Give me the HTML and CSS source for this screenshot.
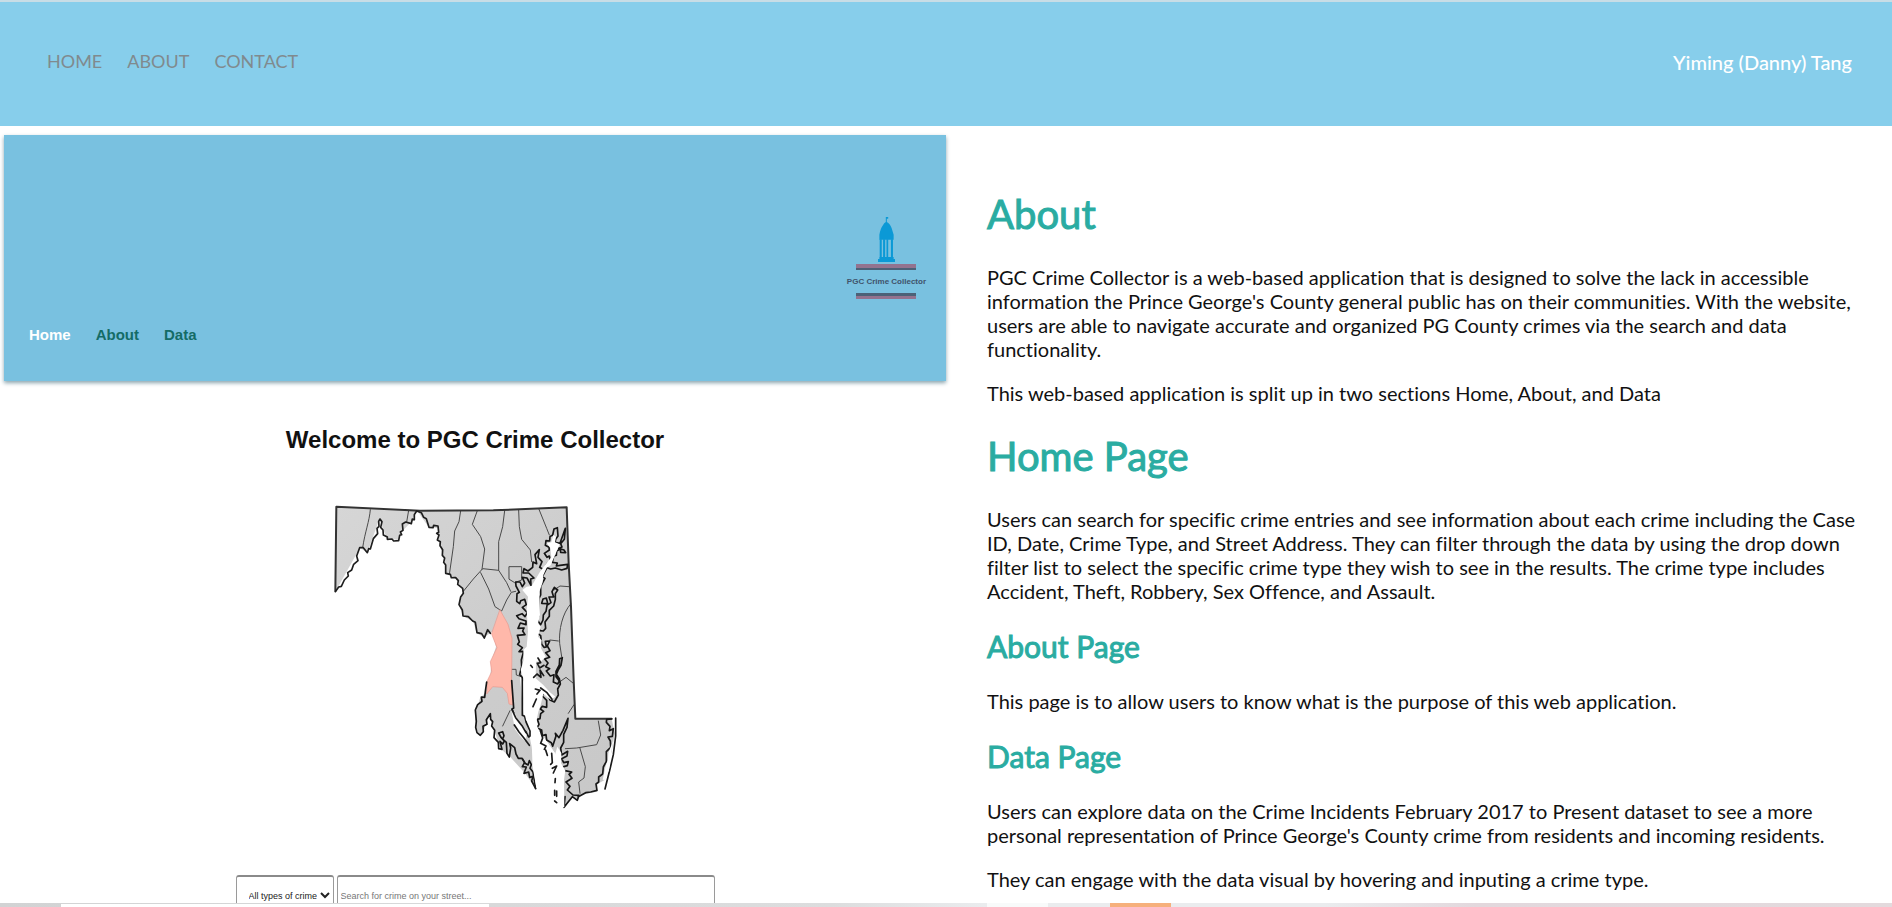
FILE: index.html
```html
<!DOCTYPE html>
<html lang="en">
<head>
<meta charset="utf-8">
<meta name="viewport" content="width=device-width, initial-scale=1">
<title>PGC Crime Collector</title>
<link rel="stylesheet" href="styles.css">
</head>
<body>
<header class="site-header">
  <nav class="site-nav">
    <a href="#home">HOME</a>
    <a href="#about">ABOUT</a>
    <a href="#contact">CONTACT</a>
  </nav>
  <div class="owner">Yiming (Danny) Tang</div>
</header>

<main class="project">
  <section class="preview">
    <div class="banner">
      <nav class="banner-nav">
        <a class="current" href="#app-home">Home</a>
        <a href="#app-about">About</a>
        <a href="#app-data">Data</a>
      </nav>
      <div class="logo">
        <svg class="dome" viewBox="0 0 50 134" preserveAspectRatio="none" aria-hidden="true">
          <g fill="#0b99d6">
            <path d="M23 0h7v5h-4v10q9 4 14 18l6 20v15H4V53q3-19 10-28 4-7 9-10z"/>
            <path d="M5 66h6v56H5zM15 66h6v56h-6zM25 66h5v56h-5zM38 66h6v56h-6zM4 119h42v7H4zM0 125h50v9H0z"/>
          </g>
        </svg>
        <div class="bar bar-top"></div>
        <div class="logo-name">PGC Crime Collector</div>
        <div class="bar bar-bottom"></div>
      </div>
    </div>
    <h2 class="welcome">Welcome to PGC Crime Collector</h2>
    <svg class="map" viewBox="0 0 990 1050" role="img" aria-label="Map of Maryland with Prince George's County highlighted">
      <defs>
        <linearGradient id="land" x1="0" y1="0" x2="1" y2="1">
          <stop offset="0" stop-color="#d6d6d6"/><stop offset="0.5" stop-color="#cdcdcd"/><stop offset="1" stop-color="#c8c8c8"/>
        </linearGradient>
      </defs>
      <g stroke-linejoin="round" stroke-linecap="round">
        <path fill="url(#land)" d="M78 80L330 91 550 90 770 83 775 250 782 380 790 600 795 716 905 716 914 760 905 815 890 850 884 900 862 912 860 935 808 946 804 960 786 950 764 985 745 900 735 820 690 755 675 700 665 780 677 925 645 880 600 830 570 805 548 735 540 700 520 755 510 768 498 745 495 700 510 655 525 640 540 600 545 540 558 500 547 455 522 472 500 460 490 425 460 408 447 375 460 335 435 292 407 280 405 245 385 180 385 145 355 140 322 93 300 130 275 155 265 180 230 175 208 118 172 218 150 203 76 335z"/>
        <path fill="#fff" d="M630 590L640 700 655 750 665 800 677 925 735 960 745 900 735 820 690 755 676 715 685 680 670 640z"/>
        <g fill="none" stroke="#4a4a4a" stroke-width="3">
          <path d="M181 89C178 125 165 155 158 203M296 91L290 126M452 92L447 125 434 153 430 200 418 284M502 92L487 133 512 170 524 207 516 268M584 92L578 140 566 185 566 271M626 91L628 140 635 178 661 210 665 245M687 88L710 145 718 165"/>
          <path d="M460 334L490 297 518 266 566 271 590 308 602 334M512 278L536 327 555 380 575 393 590 360 604 337 617 334M598 260H635V300L614 308 598 298z"/>
          <path d="M776 320L750 318 732 330M782 372C757 400 746 450 749 490L755 530M720 480L745 483M603 595L603 568 618 568 619 585 634 590M600 692L578 738M790 610L768 592 750 605M792 674L775 700M865 723L872 765 860 794 800 804 766 806M810 805L826 860 822 894 806 906 810 940"/>
        </g>
        <path fill="#ffb8aa" stroke="#e8998e" stroke-width="2" d="M570 390L594 433 606 475 605 600 609 675 597 672 592 640 577 622 548 620 530 642 532 602 545 575 541 545 561 503 545 462z"/>
        <path fill="none" stroke="#333" stroke-width="6" d="M76 333L79 80 330 92 550 91 770 82 776 250 783 380 791 600 796 716 905 716"/>
        <path fill="none" stroke="#1e1e1e" stroke-width="5" d="M76 335L86 321 94 319 103 300 115 288 113 278 125 270 131 253 144 242 140 228 149 203 160 203 172 218 176 206 181 207 190 176 203 161 201 145 207 139 206 124 210 117 216 125 212 142 219 150 220 165 232 171 232 178 246 177 251 183 266 182 269 166 275 164 271 156 279 151 277 132 287 126 304 131 307 117 313 119 313 104 320 93 334 98 341 112 349 116 357 142 369 143 371 136 384 138 386 157 380 160 387 165 382 180 391 185 390 197 398 209 397 226 404 234 401 247 407 255 407 280 421 283 424 293 437 293 445 302 443 313 458 325 460 340 452 351 447 374 457 390 459 408 475 410 488 423 496 427 501 458 515 461 523 474 533 449 541 460"/>
        <path fill="none" stroke="#161616" stroke-width="5" d="M530 606L526 635 524 652 514 651 516 664 503 674 496 690 499 724 497 742 501 758 511 766 520 755 519 739 531 733 529 719 541 701 542 718 548 725 545 738 554 751 552 773 565 787 566 806 576 808 570 784 578 792 583 783 573 772 566 759 578 755 582 767 578 777 589 787 591 820 598 831 602 804 599 791 614 803 618 822 625 835 636 835 645 850 654 855 658 842 664 854 660 865 669 876 677 925"/>
        <path fill="none" stroke="#161616" stroke-width="5" d="M605 602L611 684 606 687 616 711 620 732 636 742 638 755 647 754 656 771 660 768 660 753 649 728 644 709 637 706 637 592 629 584 635 560 634 540 641 514 627 515 637 503 623 493 628 486 622 466 645 464 638 453 642 444 624 445 631 429 648 434 648 423 627 416 620 407 636 401 645 410 652 398 637 382 649 374 644 358 632 362 629 371 620 364 621 341 628 337 618 318 617 306 630 306 637 320 644 309 637 292 651 294 663 316 662 297 672 294 656 279 639 279 642 266 654 273 668 262 669 246 680 251 675 224 688 209 684 232 696 245 689 262 701 269 711 251 721 243 718 228 711 232 703 220 718 210 717 202 706 196 708 182 719 183 720 170 728 165 732 147 742 143 744 168 737 178 735 187 750 190 766 145 763 178 752 191 756 201 746 205 762 210 767 218 752 217 751 207 740 213 739 226 731 229 727 247 742 249 739 258 750 256 773 253 771 265 755 270 736 264 722 267 711 263 697 290 705 295 692 319 692 345 687 355 686 408 682 420 692 434 699 420 700 405 708 394 712 371 695 370 699 357 709 354 714 374 723 368 717 351 731 351 726 335 733 322 743 330 736 341 736 358 731 378 718 391 718 409 705 426 707 445 700 453 690 452 684 441 683 460 692 467 695 493 702 502 709 501 706 484 719 483 712 498 720 512 707 518 719 532 704 537 714 549 707 560 719 566 709 573 721 588 732 584 730 606 743 612 748 603 738 590 738 574 748 555 749 536 757 533 753 556 744 571 739 583 748 596 751 612 743 627 745 645 733 666 720 660 715 645 701 636 697 648 710 661 710 682 697 679 691 687 701 694 692 701 690 716 682 718 687 733 681 744 695 750 697 767 708 764 710 780 724 788 728 799 738 768 736 760 747 773 759 751 774 715 771 742 761 763 761 787 752 804 755 825 773 814 771 828 755 836 761 848 775 845 772 857 754 862 765 872 785 876 777 883 786 895 768 906 780 919 772 930 789 945 807 946 802 961 787 950 762 982 765 950"/>
        <path fill="#fff" d="M640 595L632 570 641 540 640 510 650 500 654 455 650 390 654 350 637 330 650 320 665 318 690 275 709 250 724 232 721 204 711 190 724 187 730 165 738 170 735 187 749 193 733 230 722 256 710 263 700 285 698 307 688 335 690 405 684 430 692 440 684 470 695 480 693 505 707 530 694 543 678 545 677 595 700 615 719 636 736 650 722 659 700 641 692 675 685 695 678 730 690 760 705 798 722 812 731 838 742 800 754 819 753 850 766 871 762 900 763 980 735 995 690 980 680 930 667 855 667 795 664 740 648 720 643 690z"/>
        <path fill="#fff" d="M604 691L617 703 626 730 640 742 650 765 645 784 630 768 615 748z"/>
        <path fill="none" stroke="#1a1a1a" stroke-width="5" d="M667 562L662 556M671 592L681 582 693 592 690 570 701 587M684 534L692 548 682 550 689 564 702 556M676 627L690 631 681 642M679 657L669 680M692 624L711 638 726 658M691 752L698 774 692 790 708 798 703 808M707 810L712 826M725 820L727 848 722 853M727 865L740 858 730 879M736 896L735 908M734 931V946M740 933V949M734 963L740 968M637 836L644 847 637 860 649 861 642 880 656 876 659 892 669 889 665 903 677 926M606 689L617 713 636 737 648 758M613 735L627 756 640 772 658 796"/>
        <path fill="none" stroke="#1a1a1a" stroke-width="5" d="M905 717L890 718 889 727 900 739 898 752 910 746 907 769 894 771 901 783 902 802 889 815 889 844 880 861 878 882 866 891 866 906 858 912 861 931 842 936 827 938 805 950M917 714L917 768 910 824 900 867 885 927"/>
        <path fill="#fff" d="M910 780L903 820 897 870 884 900 878 899 887 858 894 841 895 820z"/>
      </g>
    </svg>
    <form class="search">
      <select aria-label="Crime type"><option>All types of crime</option></select>
      <input type="search" aria-label="Search crimes" placeholder="Search for crime on your street...">
    </form>
  </section>

  <article class="details">
    <h1>About</h1>
    <p>PGC Crime Collector is a web-based application that is designed to solve the lack in accessible information the Prince George's County general public has on their communities. With the website, users are able to navigate accurate and organized PG County crimes via the search and data functionality.</p>
    <p>This web-based application is split up in two sections Home, About, and Data</p>
    <h1>Home Page</h1>
    <p>Users can search for specific crime entries and see information about each crime including the Case ID, Date, Crime Type, and Street Address. They can filter through the data by using the drop down filter list to select the specific crime type they wish to see in the results. The crime type includes Accident, Theft, Robbery, Sex Offence, and Assault.</p>
    <h2>About Page</h2>
    <p>This page is to allow users to know what is the purpose of this web application.</p>
    <h2>Data Page</h2>
    <p>Users can explore data on the Crime Incidents February 2017 to Present dataset to see a more personal representation of Prince George's County crime from residents and incoming residents.</p>
    <p>They can engage with the data visual by hovering and inputing a crime type.</p>
  </article>
</main>
<footer class="edge"></footer>
</body>
</html>
```
FILE: styles.css
```css
* { box-sizing: border-box; }

body {
  margin: 0;
  height: 100vh;
  display: flex;
  flex-direction: column;
  overflow: hidden;
  background: #fff;
  color: #111;
  font: 20px/24px Lato, "Open Sans", sans-serif;
  font-variant-ligatures: none;
}

.site-header {
  flex: none;
  display: flex;
  justify-content: space-between;
  align-items: flex-start;
  padding: 48px 40px 52px 47px;
  border-top: 2px solid #c8dde6;
  background: #87ceeb;
}

.site-nav { display: flex; gap: 25px; font-size: 18px; line-height: 22px; }
.site-nav a { color: #808a8e; text-decoration: none; }
.owner { color: #fff; font-weight: 500; }

.project {
  flex: 1;
  min-height: 0;
  display: grid;
  grid-template-columns: 1fr 1fr;
  overflow: hidden;
}

.preview {
  padding: 9px 0 0 4px;
  display: flex;
  flex-direction: column;
  align-items: center;
  font-family: "Liberation Sans", Arial, sans-serif;
}

.banner {
  align-self: stretch;
  flex: none;
  display: flex;
  justify-content: space-between;
  align-items: flex-end;
  height: 246px;
  padding: 0 20px 34px 25px;
  background: #79c1e0;
  box-shadow: 0 2px 4px #8aa4ae;
}

.banner-nav { display: flex; gap: 25px; font-size: 15px; font-weight: 700; }
.banner-nav a { color: #146c66; text-decoration: none; }
.banner-nav .current { color: #fff; }

.logo {
  display: flex;
  flex-direction: column;
  align-items: center;
  margin-bottom: 48px;
  color: #40536b;
}
.dome { width: 17px; height: 45px; margin-bottom: 2px; }
.bar { width: 60px; height: 6px; }
.bar-top { background: linear-gradient(#93738f 60%, #4c6177 60%); }
.bar-bottom { background: linear-gradient(#4c6177 50%, #93738f 50%); }
.logo-name { font-size: 8px; line-height: 23px; font-weight: 700; white-space: nowrap; }

.welcome {
  margin: 35px 0 0;
  color: #111;
  font-size: 24px;
  line-height: 48px;
  font-weight: 700;
}

.map { flex: none; width: 330px; height: 350px; margin-top: 16px; }

.search { flex: none; display: flex; gap: 3px; margin-top: 45px; }
.search select, .search input {
  height: 41px;
  border: 1px solid #9a9a9a;
  border-top: 2px solid #8a8a8a;
  border-radius: 3px;
  background: #fff;
  font-family: inherit;
  font-size: 9px;
}
.search select { width: 98px; padding: 0 0 0 8px; color: #222; }
.search input { width: 378px; padding: 0 3px; }
.search input::placeholder { color: #777; }

.details { padding: 37px 32px 0 41px; }
.details p { margin: 20px 0; }
.details h1, .details h2 {
  color: #2aaca2;
  font-weight: 400;
  -webkit-text-stroke: 1px #2aaca2;
}
.details h1 { margin: 27px 0; font-size: 40px; line-height: 48px; }
.details h2 { margin: 25px 0; font-size: 30px; line-height: 36px; }

.edge {
  flex: none;
  height: 4px;
  background:
    linear-gradient(#f6b07c, #f6b07c) 1110px 0 / 61px 4px no-repeat,
    linear-gradient(#f8fafa, #f8fafa) 987px 0 / 61px 4px no-repeat,
    linear-gradient(#fff, #fff) 61px 1px / 428px 3px no-repeat,
    linear-gradient(90deg, #d2d3d4, #dcddde 44%, #eaecee 52%, #eaecee 70%, #e2d8dd 78%, #e3dadd);
}
```
